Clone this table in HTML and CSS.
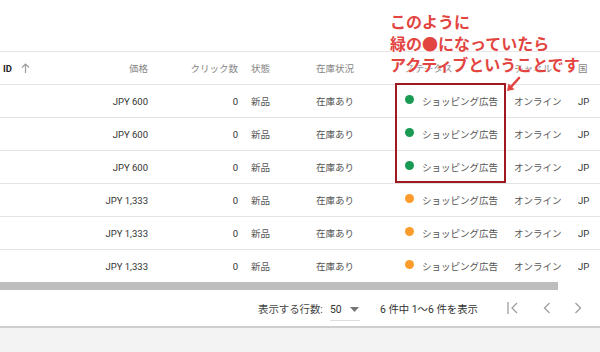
FILE: index.html
```html
<!DOCTYPE html>
<html lang="ja">
<head>
<meta charset="utf-8">
<link rel="stylesheet" href="styles.css">
</head>
<body>
<div class="screen">
  <div class="topbar"></div>
  <div class="table">
    <div class="row head">
      <div class="c id"><b>ID</b><svg class="sort" width="9" height="10" viewBox="0 0 9 10"><path d="M4.5 10V1M1 4.5L4.5 1L8 4.5" fill="none" stroke="#9e9e9e" stroke-width="1.2"/></svg></div>
      <div class="c num">価格</div>
      <div class="c num">クリック数</div>
      <div class="c st">状態</div>
      <div class="c">在庫状況</div>
      <div class="c status">ステータス</div>
      <div class="c ch">チャネル</div>
      <div class="c">国</div>
    </div>
    <div class="row">
      <div class="c id"></div><div class="c num dark">JPY 600</div><div class="c num dark">0</div><div class="c st">新品</div><div class="c">在庫あり</div>
      <div class="c status"><span class="dot green"></span>ショッピング広告</div><div class="c ch">オンライン</div><div class="c dark">JP</div>
    </div>
    <div class="row">
      <div class="c id"></div><div class="c num dark">JPY 600</div><div class="c num dark">0</div><div class="c st">新品</div><div class="c">在庫あり</div>
      <div class="c status"><span class="dot green"></span>ショッピング広告</div><div class="c ch">オンライン</div><div class="c dark">JP</div>
    </div>
    <div class="row">
      <div class="c id"></div><div class="c num dark">JPY 600</div><div class="c num dark">0</div><div class="c st">新品</div><div class="c">在庫あり</div>
      <div class="c status"><span class="dot green"></span>ショッピング広告</div><div class="c ch">オンライン</div><div class="c dark">JP</div>
    </div>
    <div class="row">
      <div class="c id"></div><div class="c num dark">JPY 1,333</div><div class="c num dark">0</div><div class="c st">新品</div><div class="c">在庫あり</div>
      <div class="c status"><span class="dot orange"></span>ショッピング広告</div><div class="c ch">オンライン</div><div class="c dark">JP</div>
    </div>
    <div class="row">
      <div class="c id"></div><div class="c num dark">JPY 1,333</div><div class="c num dark">0</div><div class="c st">新品</div><div class="c">在庫あり</div>
      <div class="c status"><span class="dot orange"></span>ショッピング広告</div><div class="c ch">オンライン</div><div class="c dark">JP</div>
    </div>
    <div class="row last">
      <div class="c id"></div><div class="c num dark">JPY 1,333</div><div class="c num dark">0</div><div class="c st">新品</div><div class="c">在庫あり</div>
      <div class="c status"><span class="dot orange"></span>ショッピング広告</div><div class="c ch">オンライン</div><div class="c dark">JP</div>
    </div>
  </div>
  <div class="scroll"><div class="thumb"></div></div>
  <div class="footer">
    <span class="lbl">表示する行数:</span>
    <span class="sel">50<svg width="9" height="5" viewBox="0 0 9 5"><path d="M0 0H9L4.5 5Z" fill="#757575"/></svg></span>
    <span class="range">6 件中 1〜6 件を表示</span>
    <span class="nav">
      <svg width="12" height="14" viewBox="0 0 12 14"><path d="M1 1V13" stroke="#9e9e9e" stroke-width="1.3"/><path d="M10 2L5 7L10 12" fill="none" stroke="#9e9e9e" stroke-width="1.3"/></svg>
      <svg width="8" height="14" viewBox="0 0 8 14"><path d="M6.5 2L1.5 7L6.5 12" fill="none" stroke="#9e9e9e" stroke-width="1.3"/></svg>
      <svg width="8" height="14" viewBox="0 0 8 14"><path d="M1.5 2L6.5 7L1.5 12" fill="none" stroke="#9e9e9e" stroke-width="1.3"/></svg>
    </span>
  </div>
  <div class="bottom"></div>

  <div class="annot">このように<br>緑の●になっていたら<br>アクティブということです</div>
  <div class="box"></div>
  <svg class="arrow" width="20" height="20" viewBox="0 0 20 20"><path d="M15 3L6 13" stroke="#e2453f" stroke-width="2.6" stroke-linecap="round"/><path d="M3 16L4.5 8.5L10.5 14.5Z" fill="#e2453f"/></svg>
</div>
</body>
</html>
```
FILE: styles.css
```css
* { box-sizing: border-box; }
html, body { margin: 0; padding: 0; }
body {
  width: 600px;
  height: 352px;
  overflow: hidden;
  background: #f3f3f3;
  font-family: Roboto, "Noto Sans CJK JP", sans-serif;
  font-size: 9.5px;
  color: #555;
}
.screen { position: relative; width: 600px; height: 352px; }
.topbar { height: 52px; background: #fff; border-bottom: 1px solid #e6e6e6; }
.table { background: #fff; }
.row {
  display: grid;
  grid-template-columns: 100px 48px 90px 78px 79px 110px 73px 1fr;
  height: 33px;
  align-items: center;
  border-bottom: 1px solid #e3e3e3;
}
.row.last { border-bottom: none; height: 32px; }
.head { color: #858585; }
.c { white-space: nowrap; }
.num { text-align: right; }
.st { padding-left: 13px; }
.status { padding-left: 10px; display: flex; align-items: center; }
.ch { padding-left: 9px; }
.dark { color: #333; }
.id { padding-left: 3px; display: flex; align-items: center; color: #222; }
.id b { font-weight: 700; font-size: 9.5px; }
.sort { margin-left: 9px; }
.dot { width: 9px; height: 9px; border-radius: 50%; margin-right: 8px; margin-top: -3px; flex: none; }
.green { background: #1a9b55; }
.orange { background: #fb9c2c; }
.scroll { height: 8px; background: #fff; }
.thumb { width: 558px; height: 8px; background: #bdbdbd; }
.footer {
  height: 38px;
  background: #fff;
  display: flex;
  align-items: center;
  padding-left: 258px;
  font-size: 10.4px;
  color: #444;
  border-bottom: 2px solid #cfcfcf;
}
.lbl { width: 72px; }
.sel {
  display: flex;
  align-items: center;
  gap: 8px;
  width: 30px;
  height: 22px;
  margin-top: 3px;
  border-bottom: 1px solid #ddd;
  color: #333;
}
.range { margin-left: 20px; color: #333; }
.nav { display: flex; align-items: center; margin-left: 29px; }
.nav svg:nth-child(1) { margin-right: 24px; }
.nav svg:nth-child(2) { margin-right: 23px; }
.bottom { height: 24px; }
.annot {
  position: absolute;
  left: 390px;
  top: 11px;
  font-family: "Noto Sans CJK JP", sans-serif;
  font-size: 16px;
  font-weight: 700;
  line-height: 21.5px;
  color: #e2453f;
  text-shadow: 0 0 2px #fff, 0 0 2px #fff, 0 0 2px #fff;
}
.box {
  position: absolute;
  left: 395px;
  top: 83px;
  width: 111px;
  height: 100px;
  border: 2px solid #9e1a20;
}
.arrow { position: absolute; left: 504px; top: 75px; }
```
